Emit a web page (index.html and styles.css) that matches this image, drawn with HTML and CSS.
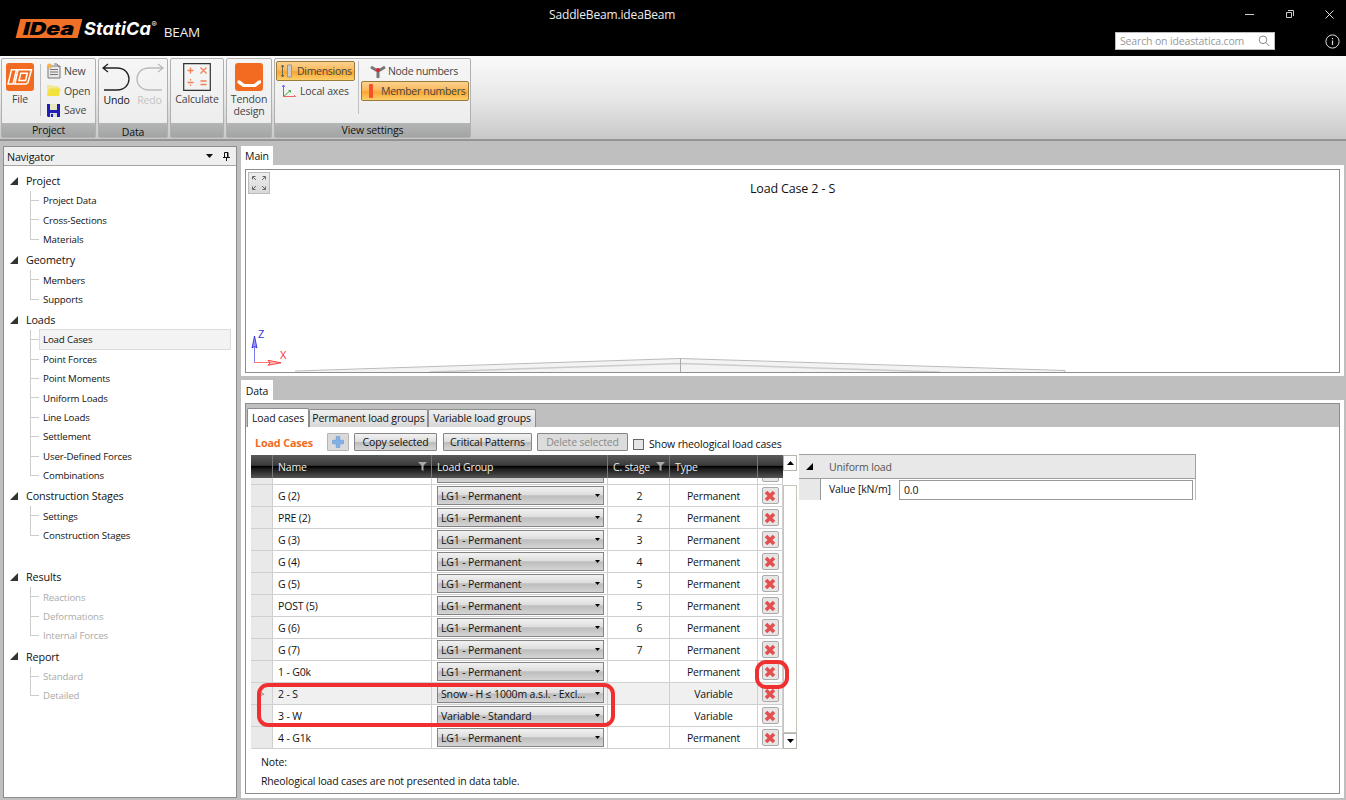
FILE: index.html
```html
<!DOCTYPE html>
<html lang="en">
<head>
  <meta charset="UTF-8" />
  <meta name="viewport" content="width=device-width, initial-scale=1.0"/>
  <title>SaddleBeam.ideaBeam</title>
  <link rel="stylesheet" href="styles.css">
</head>
<body>
  <header class="title-bar">
    <div class="brand">
      <span class="logo-box"><span class="logo-text">IDea</span></span>
      <span class="logo-name">StatiCa<sup>®</sup></span>
      <span class="logo-app">BEAM</span>
    </div>
    <div class="doc-title">SaddleBeam.ideaBeam</div>
    <div class="title-right">
      <div class="window-buttons">
        <svg width="9" height="9" viewBox="0 0 9 9"><path d="M0 4.500h9" stroke="#ccc"/></svg>
        <svg width="9" height="9" viewBox="0 0 9 9" fill="none" stroke="#ccc"><path d="M1.500 2.500h5v5h-5zM3 .5h5.500v5.500"/></svg>
        <svg width="9" height="9" viewBox="0 0 9 9"><path d="M.5.5l8 8M8.500.5l-8 8" stroke="#ddd"/></svg>
      </div>
      <div class="search-row">
        <div class="search">
          <span>Search on ideastatica.com</span>
          <svg width="12" height="12" viewBox="0 0 12 12" fill="none" stroke="#888"><circle cx="5" cy="4.800" r="3.800"/><path d="M7.800 7.500l3.500 3.500"/></svg>
        </div>
        <svg class="info" width="15" height="15" viewBox="0 0 15 15" fill="none" stroke="#ddd"><circle cx="7.500" cy="7.500" r="6.600"/><path d="M7.500 6.500v4.500M7.500 4v1.200" stroke-width="1.200"/></svg>
      </div>
    </div>
  </header>

  <div class="ribbon">
    <div class="group project">
      <div class="group-body">
        <div class="big file">
          <svg width="28" height="28" viewBox="0 0 28 28"><rect width="28" height="28" rx="3" fill="#f26b21"/><g fill="none" stroke="#fff" stroke-width="1.500"><path d="M5.500 6.800h5L7 21H2z"/><path d="M12 6.800h13.500L22 19.500 20 21H8.800zM14.800 10.200h6.500l-1.800 7.300h-6.500z"/></g></svg>
          <span>File</span>
        </div>
        <div class="small-list">
          <div class="small">
            <svg width="15" height="16" viewBox="0 0 15 16"><path d="M2 3h12v12H2z" fill="#e8e8e8" stroke="#777"/><path d="M4 6.500h8M4 9h8M4 11.500h8" stroke="#777"/><path d="M8 1l3 0 2 3" fill="none" stroke="#777"/><circle cx="3.500" cy="3" r="2.500" fill="#f4b350"/></svg>
            <span>New</span>
          </div>
          <div class="small">
            <svg width="15" height="13" viewBox="0 0 15 13"><path d="M1 1h5l1 1h6v10H1z" fill="#f3e79a"/><path d="M3 4.500h11.500L13 12H1z" fill="#f4e23c"/></svg>
            <span>Open</span>
          </div>
          <div class="small">
            <svg width="15" height="15" viewBox="0 0 15 15"><path d="M1 1h13v13H2l-1-1z" fill="#1d1fb8"/><path d="M4 1h7v6H4z" fill="#e8e6c0"/><path d="M4 10h7v4H4z" fill="#ddd"/><path d="M5 11h2v3H5z" fill="#1d1fb8"/></svg>
            <span>Save</span>
          </div>
        </div>
      </div>
      <div class="group-label">Project</div>
    </div>
    <div class="group data">
      <div class="group-body">
        <div class="big undo">
          <svg width="29" height="28" viewBox="0 0 29 28" fill="none" stroke="#222" stroke-width="1.300"><path d="M6 1L1 5l5 4M1 5h14c16 0 16 22 0 22H2"/></svg>
          <span>Undo</span>
        </div>
        <div class="big undo off">
          <svg width="29" height="28" viewBox="0 0 29 28" fill="none" stroke="#bbb" stroke-width="1.300"><path d="M23 1l5 4-5 4M28 5H14C-2 5-2 27 14 27h13"/></svg>
          <span>Redo</span>
        </div>
      </div>
      <div class="group-label low">Data</div>
    </div>
    <div class="group calc">
      <div class="group-body">
        <div class="big">
          <svg width="28" height="28" viewBox="0 0 28 28" fill="none"><path d="M.7.7h26.600v26.600H.7z" stroke="#333" stroke-width="1.200"/><path d="M4.500 7.500h6M7.500 4.500v6M17.500 4.500l6 6M23.500 4.500l-6 6M4.500 19.500h6M7.500 16v1.500M7.500 21.500v1.500M17.500 18h6M17.500 21.500h6" stroke="#f08050" stroke-width="1.300"/></svg>
          <span>Calculate</span>
        </div>
      </div>
      <div class="group-label"></div>
    </div>
    <div class="group tendon">
      <div class="group-body">
        <div class="big">
          <svg width="28" height="28" viewBox="0 0 28 28"><rect width="28" height="28" rx="3" fill="#f26b21"/><path d="M2.500 17.500h2.500l4.500 3.500h9.500l4.500-3.500H26v2.500l-5.500 4H8l-5.500-4z" fill="#fff"/></svg>
          <span>Tendon<br>design</span>
        </div>
      </div>
      <div class="group-label"></div>
    </div>
    <div class="group view-settings">
      <div class="group-body">
        <div class="view-col">
          <div class="toggle on dim">
            <svg width="12" height="14" viewBox="0 0 12 14"><path d="M1.500 1v12M0 3l1.500-2L3 3M0 11l1.500 2L3 11" fill="none" stroke="#665"/><path d="M6.500 1h4v12h-4z" fill="#ccc" stroke="#998"/></svg>
            <span>Dimensions</span>
          </div>
          <div class="toggle axes">
            <svg width="14" height="14" viewBox="0 0 14 14" fill="none"><path d="M1.500 13V1M.3 3l1.200-2 1.200 2" stroke="#66f"/><path d="M1.500 12.500l7-6M6.500 6.500h2v2" stroke="#4a4"/><path d="M1.500 12.500H13.500M12 11l1.500 1.500" stroke="#e66"/></svg>
            <span>Local axes</span>
          </div>
        </div>
        <div class="view-col second">
          <div class="toggle node-numbers">
            <svg width="16" height="13" viewBox="0 0 16 13"><path d="M1 2l5 3h4l5-3M8 5v8" fill="none" stroke="#777" stroke-width="3"/><circle cx="8" cy="5" r="2" fill="#d23"/></svg>
            <span>Node numbers</span>
          </div>
          <div class="toggle on member">
            <svg width="6" height="14" viewBox="0 0 6 14"><rect x="1" y="0" width="4" height="14" rx="1" fill="#f4502c"/></svg>
            <span>Member numbers</span>
          </div>
        </div>
      </div>
      <div class="group-label">View settings</div>
    </div>
  </div>

  <div class="workspace">
    <aside class="navigator">
      <div class="nav-header">
        <span>Navigator</span>
        <svg width="26" height="11" viewBox="0 0 26 11"><path d="M0 3h7l-3.500 4z" fill="#111"/><path d="M18.500 1.500h3.500v5h-3.500zM17 6.500h7M20.500 6.500V10M21.500 1.500v5" fill="none" stroke="#111"/></svg>
      </div>
      <div class="tree" id="tree"></div>
    </aside>

    <main class="content">
      <div class="dock-tabs"><span class="dock-tab">Main</span></div>
      <section class="panel main-panel">
        <div class="view">
          <div class="expand">
            <svg width="16" height="16" viewBox="0 0 16 16" fill="none" stroke="#666"><path d="M5 5L2 2M1.500 4.500v-3h3M11 5l3-3M11.500 1.500h3v3M5 11l-3 3M1.500 11.500v3h3M11 11l3 3M11.500 14.500h3v-3"/></svg>
          </div>
          <div class="view-title">Load Case 2 - S</div>
          <svg class="beam" width="1094" height="52" viewBox="246 320 1094 52">
            <path d="M295 371.500L680 358.500 1065 371V374H295z" fill="#f3f3f3"/>
            <path d="M295 371L680 358.500 1065 370.500V373" fill="none" stroke="#bbb"/>
            <path d="M430 372L680 363.500 940 372" fill="none" stroke="#ccc" stroke-width="1.500"/>
            <path d="M680.500 358.500V373" stroke="#aaa"/>
            <path d="M254.500 362V337" stroke="#7b7bf0"/>
            <path d="M254.500 336l-2.500 12 2.500-1.500 2.500 1.500z" fill="#99f" stroke="#22c" stroke-width=".8"/>
            <path d="M254 362.500h16" stroke="#f77"/>
            <path d="M281 362.800l-13-2.500 2 2.500-2 2.500z" fill="#fbb" stroke="#e22" stroke-width=".8"/>
            <text x="258" y="338" class="axis-z">Z</text>
            <text x="280" y="359" class="axis-x">X</text>
          </svg>
        </div>
      </section>

      <div class="dock-tabs data-tabs"><span class="dock-tab">Data</span></div>
      <section class="panel data-panel">
        <div class="data-frame">
          <div class="inner-tabs">
            <span class="inner-tab active">Load cases</span>
            <span class="inner-tab perm">Permanent load groups</span>
            <span class="inner-tab vari">Variable load groups</span>
          </div>
          <div class="data-body">
            <div class="toolbar">
              <span class="heading">Load Cases</span>
              <button class="btn add"><svg width="12" height="12" viewBox="0 0 12 12"><path d="M4.200.5h3.600v3.700h3.700v3.600H7.800v3.700H4.200V7.800H.5V4.200h3.700z" fill="#7fb0e6" stroke="#6a9bd4" stroke-width=".6"/></svg></button>
              <button class="btn copy">Copy selected</button>
              <button class="btn critical">Critical Patterns</button>
              <button class="btn delete-sel" disabled>Delete selected</button>
              <span class="check"></span>
              <span class="check-label">Show rheological load cases</span>
            </div>
            <div class="grids">
              <div class="grid">
                <div class="grid-head">
                  <span class="c-handle"></span>
                  <span class="c-name">Name<svg width="9" height="10" viewBox="0 0 9 10"><path d="M0 0h9L5.500 3.500V9L3.500 8V3.500z" fill="#aaa"/></svg></span>
                  <span class="c-group">Load Group</span>
                  <span class="c-stage">C. stage<svg width="9" height="10" viewBox="0 0 9 10"><path d="M0 0h9L5.500 3.500V9L3.500 8V3.500z" fill="#aaa"/></svg></span>
                  <span class="c-type">Type</span>
                  <span class="c-del"></span>
                </div>
                <div class="grid-rows" id="rows"></div>
              </div>
              <div class="scroll">
                <span class="scroll-btn"><svg width="7" height="4" viewBox="0 0 7 4"><path d="M0 4h7L3.500 0z"/></svg></span>
                <span class="scroll-thumb"></span>
                <span class="scroll-btn"><svg width="7" height="4" viewBox="0 0 7 4"><path d="M0 0h7L3.500 4z"/></svg></span>
              </div>
              <div class="props">
                <div class="props-head">
                  <svg width="7" height="7" viewBox="0 0 7 7"><path d="M7 0v7H0z"/></svg>
                  <span>Uniform load</span>
                </div>
                <div class="props-row">
                  <span class="props-handle"></span>
                  <span class="props-label">Value [kN/m]</span>
                  <span class="props-input">0.0</span>
                </div>
              </div>
            </div>
            <div class="note">
              <p>Note:</p>
              <p>Rheological load cases are not presented in data table.</p>
            </div>
          </div>
        </div>
      </section>
    </main>
  </div>

  <!-- red highlights over the grid -->
  <div class="mark mark-rows"></div>
  <div class="mark mark-delete"></div>

  <script>
    const tree = [
      { name: 'Project', items: ['Project Data', 'Cross-Sections', 'Materials'] },
      { name: 'Geometry', items: ['Members', 'Supports'] },
      { name: 'Loads', items: ['Load Cases', 'Point Forces', 'Point Moments', 'Uniform Loads', 'Line Loads', 'Settlement', 'User-Defined Forces', 'Combinations'] },
      { name: 'Construction Stages', items: ['Settings', 'Construction Stages'] },
      { name: 'Results', items: ['Reactions', 'Deformations', 'Internal Forces'], off: true, gap: true },
      { name: 'Report', items: ['Standard', 'Detailed'], off: true }
    ];
    document.getElementById('tree').innerHTML = tree.map(g => `
      <div class="node ${g.off ? 'off' : ''} ${g.gap ? 'gap' : ''}">
        <div class="node-name"><svg width="8" height="8" viewBox="0 0 8 8"><path d="M8 0v8H0z" fill="#333"/></svg>${g.name}</div>
        <ul>${g.items.map(i => `<li class="${i === 'Load Cases' ? 'selected' : ''}"><span>${i}</span></li>`).join('')}</ul>
      </div>`).join('');

    const perm = 'LG1 - Permanent';
    const rows = [
      ['G (2)', perm, '2', 'Permanent'],
      ['PRE (2)', perm, '2', 'Permanent'],
      ['G (3)', perm, '3', 'Permanent'],
      ['G (4)', perm, '4', 'Permanent'],
      ['G (5)', perm, '5', 'Permanent'],
      ['POST (5)', perm, '5', 'Permanent'],
      ['G (6)', perm, '6', 'Permanent'],
      ['G (7)', perm, '7', 'Permanent'],
      ['1 - G0k', perm, '', 'Permanent'],
      ['2 - S', 'Snow - H ≤ 1000m a.s.l. - Excl...', '', 'Variable'],
      ['3 - W', 'Variable - Standard', '', 'Variable'],
      ['4 - G1k', perm, '', 'Permanent']
    ];
    // the row scrolled under the header only shows its lower edge
    const scrolled = `
      <div class="row scrolled">
        <span class="c-handle"></span><span class="c-name"></span>
        <span class="c-group"><span class="combo"></span></span>
        <span class="c-stage"></span><span class="c-type"></span>
        <span class="c-del"><span class="del"></span></span>
      </div>`;
    document.getElementById('rows').innerHTML = scrolled + rows.map(r => `
      <div class="row ${r[0] === '2 - S' ? 'current' : ''}">
        <span class="c-handle">${r[0] === '2 - S' ? '&gt;' : ''}</span>
        <span class="c-name">${r[0]}</span>
        <span class="c-group"><span class="combo">${r[1]}<svg width="5" height="3" viewBox="0 0 5 3"><path d="M0 0h5L2.500 3z"/></svg></span></span>
        <span class="c-stage">${r[2]}</span>
        <span class="c-type">${r[3]}</span>
        <span class="c-del"><span class="del"><svg width="12" height="12" viewBox="0 0 12 12"><path d="M2 2l8 8M10 2l-8 8" stroke="#e25050" stroke-width="3.600"/></svg></span></span>
      </div>`).join('');
  </script>
</body>
</html>
```
FILE: styles.css
```css
* {
  box-sizing: border-box;
}
html, body {
  margin: 0;
  padding: 0;
  overflow: hidden;
}
body {
  width: 1346px;
  height: 800px;
  display: flex;
  flex-direction: column;
  position: relative;
  background: #bfbfbf;
  font-family: "Open Sans", "Noto Sans", sans-serif;
  font-size: 10.5px;
  letter-spacing: -0.15px;
  color: #111;
  white-space: nowrap;
}
svg {
  display: block;
  flex: none;
}
.title-bar {
  height: 56px;
  flex: none;
  background: #000;
  color: #eee;
  display: flex;
}
.brand {
  width: 549px;
  display: flex;
  align-items: center;
  padding: 0 0 0 18px;
}
.logo-box {
  width: 62px;
  height: 19px;
  background: #f07028;
  transform: skewX(-14deg);
  display: flex;
  align-items: center;
  justify-content: center;
}
.logo-text {
  font-family: "Inter", sans-serif;
  font-size: 18px;
  line-height: 19px;
  font-weight: 900;
  color: #000;
  letter-spacing: 0;
  transform: scaleX(1.28);
}
.logo-name {
  margin-left: 4px;
  font-family: "Inter", sans-serif;
  font-size: 18px;
  font-weight: 700;
  font-style: italic;
  letter-spacing: 0.2px;
  color: #fff;
}
.logo-name sup {
  font-size: 8px;
  font-weight: 400;
  line-height: 0;
  vertical-align: 8px;
}
.logo-app {
  margin: 7px 0 0 7px;
  font-size: 13.5px;
}
.doc-title {
  flex: 1;
  padding-top: 6px;
  font-size: 12px;
}
.title-right {
  padding-right: 6px;
}
.window-buttons {
  display: flex;
  justify-content: flex-end;
  gap: 31px;
  padding: 10px 6px 0 0;
}
.search-row {
  display: flex;
  justify-content: flex-end;
  align-items: center;
  gap: 50px;
  margin-top: 13px;
}
.search {
  width: 160px;
  height: 18px;
  background: #fff;
  border: 1px solid #bbb;
  color: #999;
  display: flex;
  align-items: center;
  justify-content: space-between;
  padding: 0 4px;
}

/* ribbon */
.ribbon {
  height: 85px;
  flex: none;
  display: flex;
  gap: 2px;
  padding: 2px 0 0 1px;
  background: linear-gradient(#fafafa, #e8e8e8 50%, #c9c9c9);
  border-bottom: 2px solid #939593;
}
.group {
  height: 80px;
  border: 1px solid #b0b0b0;
  border-radius: 2px;
  background: linear-gradient(#f6f6f6, #ebebeb);
  display: flex;
  flex-direction: column;
  color: #444;
}
.group-body {
  flex: 1;
  min-height: 0;
  display: flex;
  justify-content: center;
}
.group-label {
  height: 14px;
  flex: none;
  background: linear-gradient(#b4b6b6, #a3a5a5);
  color: #111;
  text-align: center;
  line-height: 15px;
}
.group-label.low {
  line-height: 18px;
}
.project { width: 95px; }
.data { width: 70px; }
.calc { width: 54px; }
.tendon { width: 46px; }
.view-settings { width: 197px; }
.big {
  display: flex;
  flex-direction: column;
  align-items: center;
  padding-top: 4px;
  line-height: 12px;
  text-align: center;
}
.big span {
  margin-top: 2px;
}
.file {
  width: 36px;
}
.undo {
  width: 33px;
}
.undo span {
  margin-top: 3px;
  color: #111;
}
.undo.off span {
  color: #c4c4c4;
}
.small-list {
  height: 52px;
  margin: 5px 0 0 2px;
  padding-left: 5px;
  border-left: 1px solid #c0c0c0;
  flex: 1;
}
.small {
  display: flex;
  align-items: center;
  gap: 3px;
  height: 19.7px;
  position: relative;
  top: -3px;
}
.view-settings .group-body {
  justify-content: flex-start;
  padding: 2px 1px;
}
.view-col {
  width: 83px;
  border-right: 1px solid #c0c0c0;
  margin-bottom: 7px;
}
.view-col.second {
  width: 108px;
  border: none;
  margin-left: 2px;
}
.toggle {
  height: 20px;
  display: flex;
  align-items: center;
  gap: 4px;
  padding-left: 4px;
  border: 1px solid transparent;
}
.dim {
  width: 79px;
  letter-spacing: -0.3px;
}
.node-numbers {
  gap: 2px;
  padding-left: 8px;
  letter-spacing: -0.3px;
}
.axes {
  padding-left: 5px;
}
.toggle.on {
  border: 1px solid #9a7a38;
  border-radius: 2px;
  background: linear-gradient(#fbd291, #fbb95a 45%, #f9a52e 55%, #fdcf6c);
}
.member {
  gap: 7px;
  padding-left: 6px;
  letter-spacing: -0.3px;
}

/* workspace */
.workspace {
  flex: 1;
  display: flex;
  gap: 4px;
  padding: 5px 2px 2px 3px;
  min-height: 0;
}
.navigator {
  width: 234px;
  background: #fff;
  border: 1px solid #8d8d8d;
}
.nav-header {
  height: 19px;
  background: #efefef;
  border-bottom: 1px solid #a5a5a5;
  display: flex;
  align-items: center;
  justify-content: space-between;
  padding: 0 4px 0 3px;
  font-size: 10.8px;
}
.tree {
  padding: 4px 5px 0 6px;
}
.tree .gap {
  margin-top: 21px;
}
.node-name {
  height: 21.1px;
  display: flex;
  align-items: center;
  gap: 8px;
  font-size: 10.8px;
}
.tree ul {
  list-style: none;
  margin: 0;
  padding: 0 0 0 20px;
}
.tree li {
  height: 19.4px;
  line-height: 19px;
  display: flex;
  align-items: center;
  font-size: 9.7px;
  background: linear-gradient(#ccc, #ccc) 0 9px / 9px 1px no-repeat, linear-gradient(#ccc, #ccc) 0 0 / 1px 100% no-repeat;
}
.tree li:last-child {
  background-size: 9px 1px, 1px 10px;
}
.tree li span {
  margin-left: 9px;
  padding-left: 4px;
  flex: 1;
}
.tree li.selected span {
  background: #f3f3f3;
  border: 1px solid #dcdcdc;
  padding-left: 3px;
}
.off li {
  color: #aaa;
}
.content {
  flex: 1;
  display: flex;
  flex-direction: column;
}
.dock-tabs {
  height: 19px;
  flex: none;
  display: flex;
}
.dock-tab {
  width: 32px;
  background: #fff;
  text-align: center;
  line-height: 21px;
}
.data-tabs {
  margin-top: 4px;
  height: 20px;
}
.data-tabs .dock-tab {
  line-height: 22px;
}
.panel {
  background: #fff;
  padding: 4px;
}
.main-panel {
  height: 211px;
  flex: none;
}
.data-panel {
  flex: 1;
  min-height: 0;
  padding-top: 3px;
}
.view {
  position: relative;
  height: 204px;
  border: 1px solid #8d8d8d;
}
.expand {
  position: absolute;
  left: 2px;
  top: 2px;
  width: 22px;
  height: 22px;
  background: linear-gradient(#eee, #d8d8d8);
  border: 1px solid #bbb;
  display: flex;
  align-items: center;
  justify-content: center;
}
.view-title {
  text-align: center;
  padding-top: 10px;
  font-size: 12.5px;
}
.beam {
  position: absolute;
  left: 0;
  bottom: 0;
}
.axis-z, .axis-x {
  font-size: 11px;
}
.axis-z { fill: #33d; }
.axis-x { fill: #e33; }
.data-frame {
  height: 391px;
  border: 1px solid #8d8d8d;
  background: #fff;
}
.inner-tabs {
  height: 23px;
  background: #bfbfbf;
  display: flex;
  align-items: flex-end;
  padding-left: 1px;
}
.inner-tab {
  height: 18px;
  border: 1px solid #8d8d8d;
  border-bottom: none;
  border-radius: 2px 2px 0 0;
  background: linear-gradient(#f0f0f0, #d8d8d8);
  text-align: center;
  line-height: 16px;
}
.inner-tab.active {
  width: 62px;
  height: 19px;
  line-height: 18px;
  background: #fff;
}
.perm {
  width: 119px;
}
.vari {
  width: 108px;
}
.toolbar {
  height: 28px;
  padding: 4px 0 2px 9px;
  display: flex;
  align-items: center;
}
.heading {
  width: 72px;
  color: #ef6c1f;
  font-weight: 700;
  font-size: 10.8px;
}
.btn {
  height: 18px;
  margin: 0 6px 0 0;
  padding: 0;
  border: 1px solid #858585;
  border-radius: 1px;
  background: linear-gradient(#f2f2f2, #dcdcdc 50%, #bcbcbc 52%, #d6d6d6);
  font: inherit;
  letter-spacing: inherit;
  color: #111;
  display: flex;
  align-items: center;
  justify-content: center;
}
.add {
  width: 22px;
  margin-right: 5px;
  border-color: #b4b4b4;
  background: #dadada;
}
.copy { width: 83px; }
.btn.critical {
  width: 89px;
  margin-right: 5px;
}
.btn.delete-sel {
  width: 91px;
  margin-right: 5px;
  background: #dcdcdc;
  color: #8a8a8a;
}
.check {
  width: 11px;
  height: 11px;
  margin: 4px 5px 0 0;
  border: 1px solid #666;
  background: #e4e4e4;
}
.check-label {
  margin-top: 4px;
}
.grids {
  display: flex;
  padding-left: 5px;
}
.grid {
  width: 532px;
  height: 294px;
  overflow: hidden;
}
.grid-head {
  height: 23px;
  display: flex;
  background: linear-gradient(#5a5a5a, #3a3a3a 45%, #000 50%, #1a1a1a 60%, #555);
  color: #eee;
}
.grid-head span {
  display: flex;
  align-items: center;
  border-right: 1px solid #777;
}
.grid-head span:last-child {
  border: none;
}
.c-handle { width: 22px; }
.c-name { width: 159px; padding-left: 5px; }
.c-group { width: 176px; padding-left: 5px; }
.c-stage { width: 62px; }
.c-type { width: 88px; }
.c-del { width: 25px; }
.grid-head .c-name, .grid-head .c-stage {
  justify-content: space-between;
  padding-right: 4px;
}
.grid-head .c-stage, .grid-head .c-type {
  padding-left: 5px;
}
.grid-rows {
  height: 271px;
  display: flex;
  flex-direction: column;
}
.row {
  height: 22px;
  flex: none;
  display: flex;
  border-bottom: 1px solid #d0d0d0;
}
.row.scrolled {
  height: 7px;
  align-items: flex-end;
  overflow: hidden;
}
.row.scrolled > span {
  height: 22px;
}
.row > span {
  border-right: 1px solid #d0d0d0;
  display: flex;
  align-items: center;
}
.row > .c-handle {
  background: #e9e9e9;
  justify-content: center;
  color: #777;
}
.row .c-stage, .row .c-type, .row .c-del {
  justify-content: center;
}
.row .c-stage {
  padding-left: 2px;
}
.row.current {
  background: #f0f0f0;
}
.combo {
  width: 167px;
  height: 19px;
  border: 1px solid #858585;
  background: linear-gradient(#f2f2f2, #dedede 45%, #bdbdbd 52%, #d4d4d4);
  display: flex;
  align-items: center;
  justify-content: space-between;
  padding: 0 3px 0 3px;
}
.del {
  width: 17px;
  height: 17px;
  border: 1px solid #aaa;
  border-radius: 2px;
  background: #e6e6e6;
  display: flex;
  align-items: center;
  justify-content: center;
}
.scroll {
  width: 14px;
  height: 294px;
  display: flex;
  flex-direction: column;
}
.scroll-btn {
  height: 16px;
  border: 1px solid #b5b5ae;
  background: #fff;
  display: flex;
  align-items: center;
  justify-content: center;
}
.scroll-thumb {
  flex: 1;
  margin-top: 14px;
  border: 1px solid #c5c5bc;
  background: #fff;
}
.props {
  width: 397px;
  margin: -1px 0 0 2px;
}
.props-head {
  height: 25px;
  display: flex;
  align-items: center;
  gap: 16px;
  padding-left: 7px;
  background: #e8e8e8;
  border: 1px solid #a0a0a0;
  border-left: none;
  color: #555;
}
.props-row {
  height: 21px;
  display: flex;
  border-right: 1px solid #bbb;
}
.props-handle {
  width: 22px;
  background: #e8e8e8;
  border-right: 1px solid #999;
}
.props-label {
  width: 78px;
  padding-left: 8px;
  line-height: 21px;
}
.props-input {
  width: 294px;
  height: 20px;
  margin-top: 1px;
  border: 1px solid #999;
  padding-left: 4px;
  line-height: 18px;
}
.note {
  padding: 4px 0 0 15px;
}
.note p {
  margin: 0;
  line-height: 19px;
}
.mark {
  position: absolute;
  border: 4px solid #f03030;
}
.mark-rows {
  left: 257px;
  top: 683px;
  width: 358px;
  height: 44px;
  border-radius: 11px;
}
.mark-delete {
  left: 755px;
  top: 660px;
  width: 34px;
  height: 29px;
  border-radius: 11px;
}
```
